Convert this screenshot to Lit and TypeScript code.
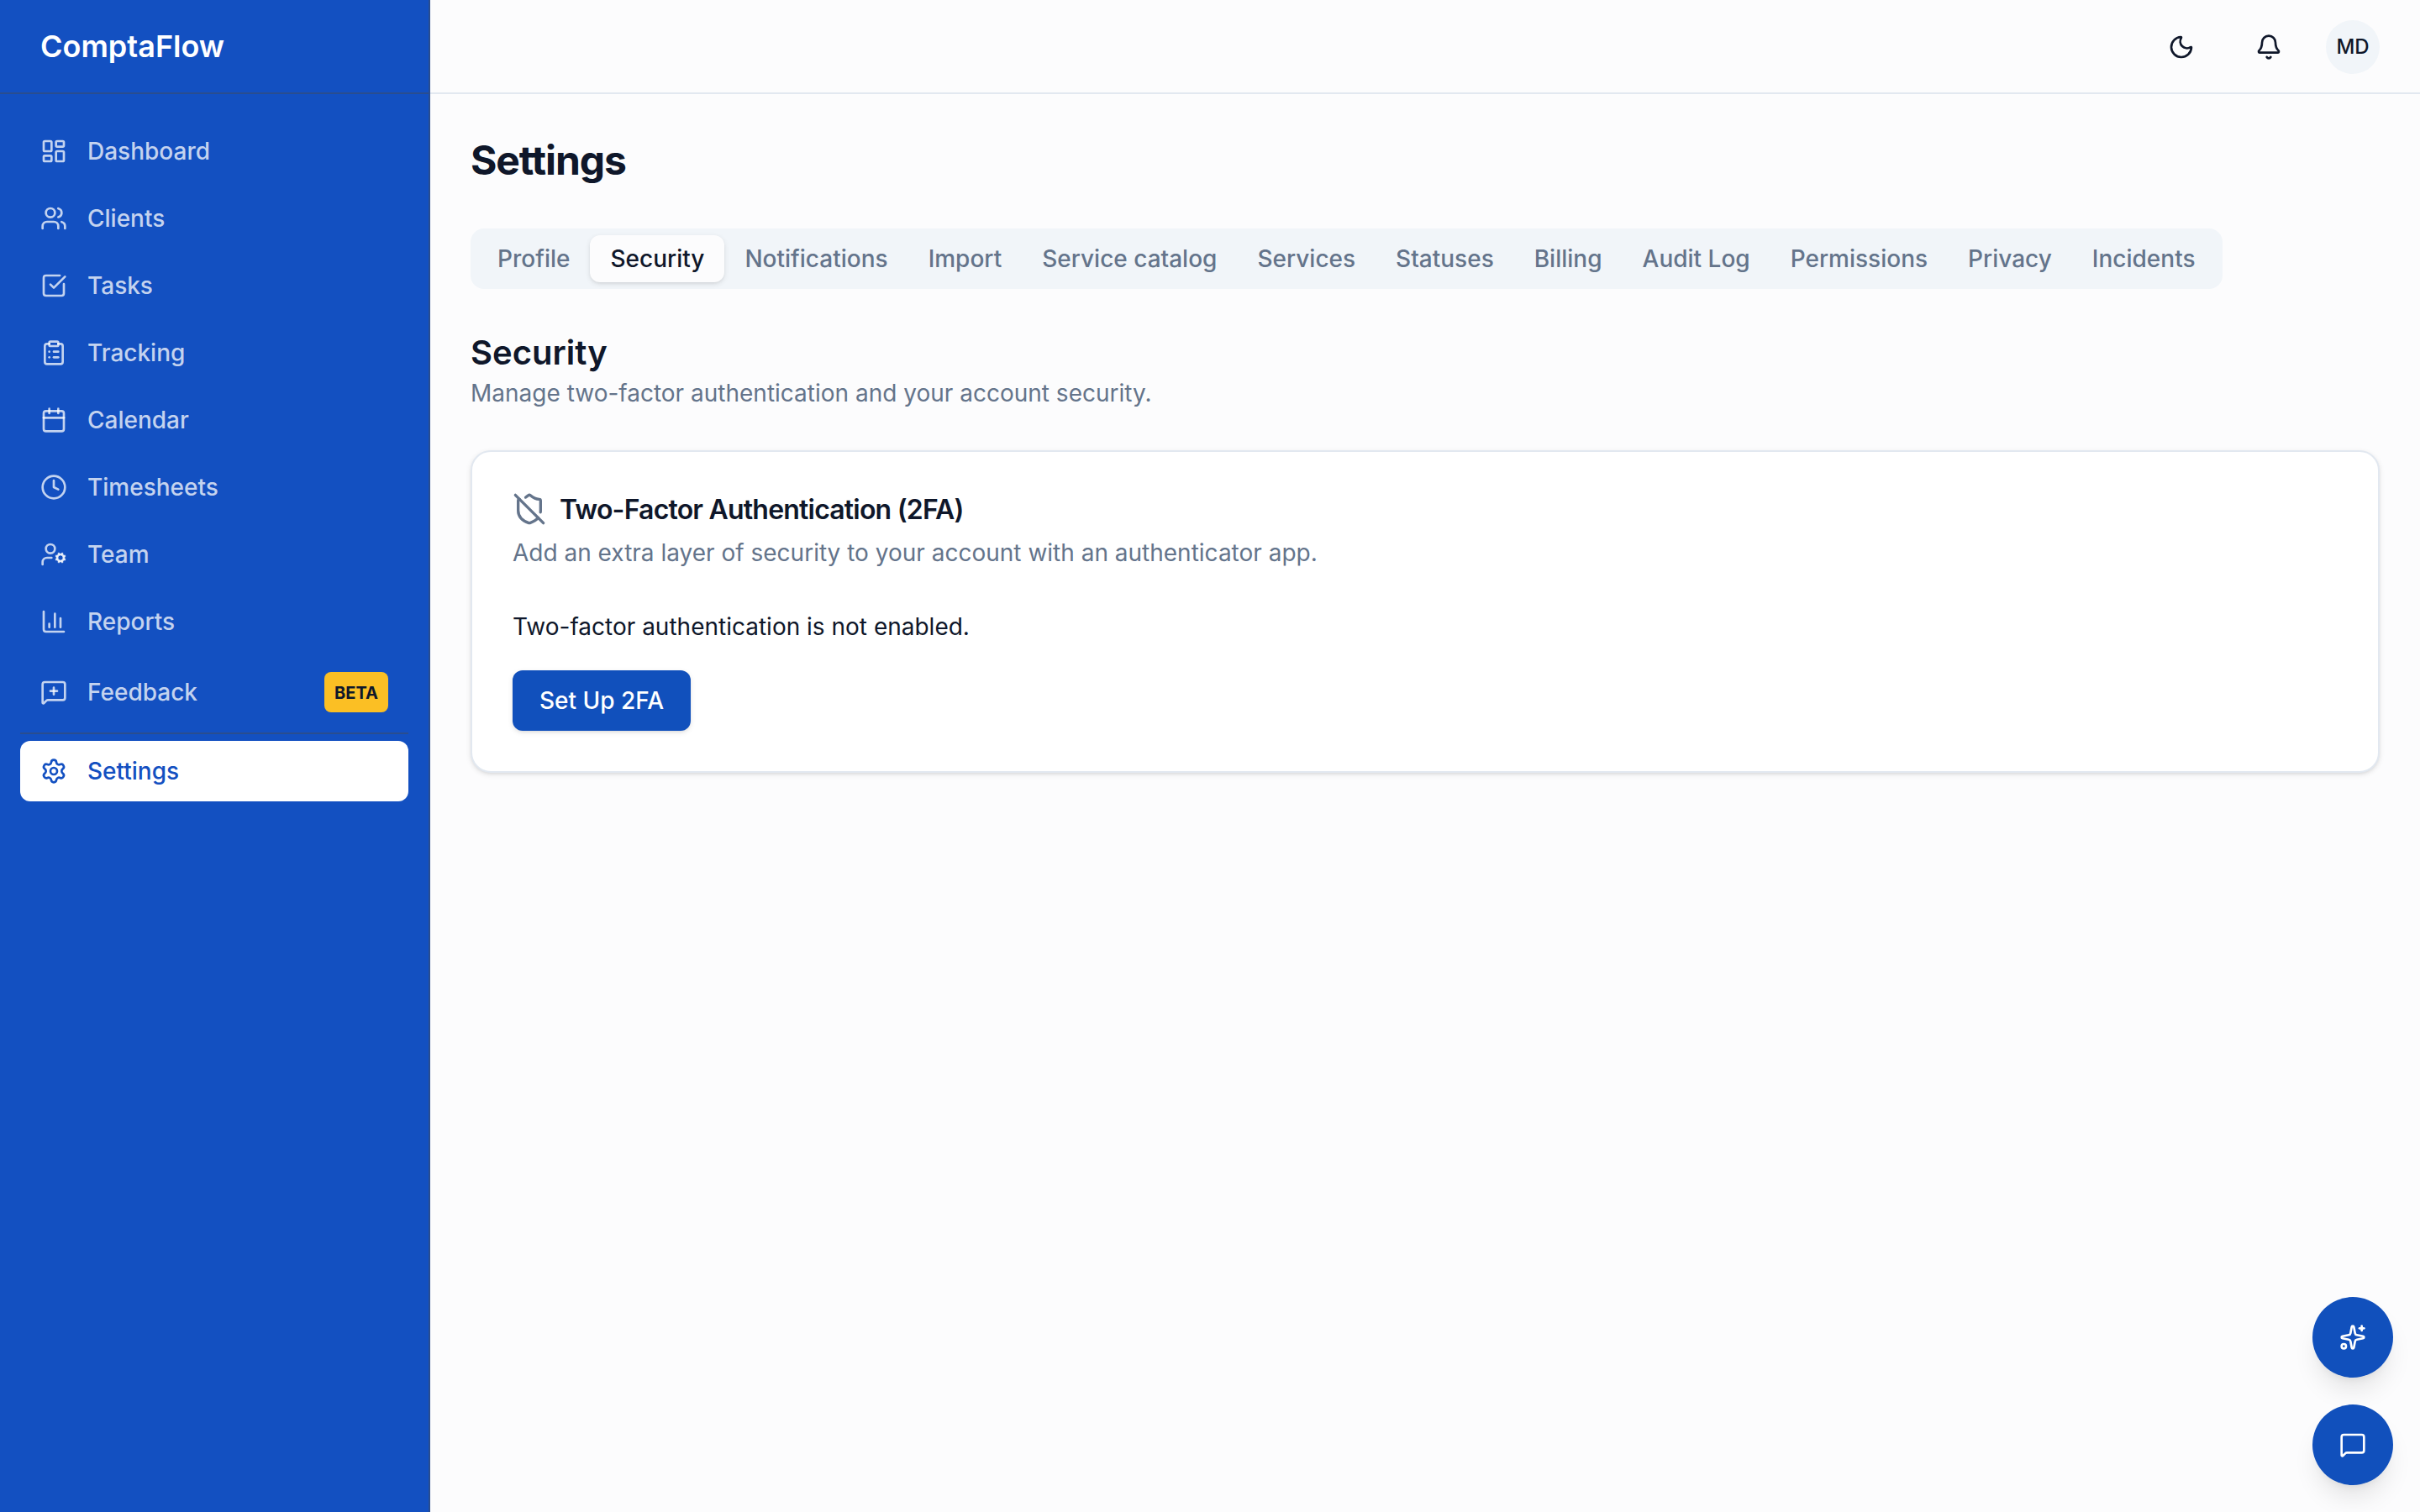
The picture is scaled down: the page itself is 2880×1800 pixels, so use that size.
import { LitElement, html, svg, css } from "lit";
import { customElement, property } from "lit/decorators.js";
import { classMap } from "lit/directives/class-map.js";

const ICONS: Record<string, unknown> = {
  dashboard: svg`<rect width="7" height="9" x="3" y="3" rx="1"/><rect width="7" height="5" x="14" y="3" rx="1"/><rect width="7" height="9" x="14" y="12" rx="1"/><rect width="7" height="5" x="3" y="16" rx="1"/>`,
  users: svg`<path d="M16 21v-2a4 4 0 0 0-4-4H6a4 4 0 0 0-4 4v2"/><path d="M16 3.128a4 4 0 0 1 0 7.744"/><path d="M22 21v-2a4 4 0 0 0-3-3.87"/><circle cx="9" cy="7" r="4"/>`,
  check: svg`<path d="M21 10.656V19a2 2 0 0 1-2 2H5a2 2 0 0 1-2-2V5a2 2 0 0 1 2-2h12.344"/><path d="m9 11 3 3L22 4"/>`,
  clipboard: svg`<rect width="8" height="4" x="8" y="2" rx="1" ry="1"/><path d="M16 4h2a2 2 0 0 1 2 2v14a2 2 0 0 1-2 2H6a2 2 0 0 1-2-2V6a2 2 0 0 1 2-2h2"/><path d="M12 11h4"/><path d="M12 16h4"/><path d="M8 11h.01"/><path d="M8 16h.01"/>`,
  calendar: svg`<path d="M8 2v4"/><path d="M16 2v4"/><rect width="18" height="18" x="3" y="4" rx="2"/><path d="M3 10h18"/>`,
  clock: svg`<path d="M12 6v6l4 2"/><circle cx="12" cy="12" r="10"/>`,
  userCog: svg`<path d="M10 15H6a4 4 0 0 0-4 4v2"/><path d="m14.305 16.53.923-.382"/><path d="m15.228 13.852-.923-.383"/><path d="m16.852 12.228-.383-.923"/><path d="m16.852 17.772-.383.924"/><path d="m19.148 12.228.383-.923"/><path d="m19.53 18.696-.382-.924"/><path d="m20.772 13.852.924-.383"/><path d="m20.772 16.148.924.383"/><circle cx="18" cy="15" r="3"/><circle cx="9" cy="7" r="4"/>`,
  chart: svg`<path d="M3 3v16a2 2 0 0 0 2 2h16"/><path d="M18 17V9"/><path d="M13 17V5"/><path d="M8 17v-3"/>`,
  messagePlus: svg`<path d="M22 17a2 2 0 0 1-2 2H6.828a2 2 0 0 0-1.414.586l-2.202 2.202A.71.71 0 0 1 2 21.286V5a2 2 0 0 1 2-2h16a2 2 0 0 1 2 2z"/><path d="M12 8v6"/><path d="M9 11h6"/>`,
  message: svg`<path d="M22 17a2 2 0 0 1-2 2H6.828a2 2 0 0 0-1.414.586l-2.202 2.202A.71.71 0 0 1 2 21.286V5a2 2 0 0 1 2-2h16a2 2 0 0 1 2 2z"/>`,
  settings: svg`<path d="M9.671 4.136a2.34 2.34 0 0 1 4.659 0 2.34 2.34 0 0 0 3.319 1.915 2.34 2.34 0 0 1 2.33 4.033 2.34 2.34 0 0 0 0 3.831 2.34 2.34 0 0 1-2.33 4.033 2.34 2.34 0 0 0-3.319 1.915 2.34 2.34 0 0 1-4.659 0 2.34 2.34 0 0 0-3.32-1.915 2.34 2.34 0 0 1-2.33-4.033 2.34 2.34 0 0 0 0-3.831A2.34 2.34 0 0 1 6.35 6.051a2.34 2.34 0 0 0 3.319-1.915"/><circle cx="12" cy="12" r="3"/>`,
  moon: svg`<path d="M20.985 12.486a9 9 0 1 1-9.473-9.472c.405-.022.617.46.402.803a6 6 0 0 0 8.268 8.268c.344-.215.825-.004.803.401"/>`,
  bell: svg`<path d="M10.268 21a2 2 0 0 0 3.464 0"/><path d="M3.262 15.326A1 1 0 0 0 4 17h16a1 1 0 0 0 .74-1.673C19.41 13.956 18 12.499 18 8A6 6 0 0 0 6 8c0 4.499-1.411 5.956-2.738 7.326"/>`,
  shieldOff: svg`<path d="m2 2 20 20"/><path d="M5 5a1 1 0 0 0-1 1v7c0 5 3.5 7.5 7.67 8.94a1 1 0 0 0 .67.01c2.35-.82 4.48-1.97 5.9-3.71"/><path d="M9.309 3.652A12.252 12.252 0 0 0 11.24 2.28a1.17 1.17 0 0 1 1.52 0C14.51 3.81 17 5 19 5a1 1 0 0 1 1 1v7a9.784 9.784 0 0 1-.08 1.264"/>`,
  sparkles: svg`<path d="M11.017 2.814a1 1 0 0 1 1.966 0l1.051 5.558a2 2 0 0 0 1.594 1.594l5.558 1.051a1 1 0 0 1 0 1.966l-5.558 1.051a2 2 0 0 0-1.594 1.594l-1.051 5.558a1 1 0 0 1-1.966 0l-1.051-5.558a2 2 0 0 0-1.594-1.594l-5.558-1.051a1 1 0 0 1 0-1.966l5.558-1.051a2 2 0 0 0 1.594-1.594z"/><path d="M20 2v4"/><path d="M22 4h-4"/><circle cx="4" cy="20" r="2"/>`,
};

@customElement("line-icon")
class LineIcon extends LitElement {
  @property() name = "";

  static styles = css`
    :host { display: block; flex: none; width: 32px; height: 32px; }
    .glyph {
      display: block; width: 100%; height: 100%;
      fill: none; stroke: currentColor; stroke-width: 2;
      stroke-linecap: round; stroke-linejoin: round;
    }
  `;

  render() {
    return html`<svg class="glyph" viewBox="0 0 24 24" aria-hidden="true">${ICONS[this.name]}</svg>`;
  }
}

interface NavEntry { icon: string; label: string; badge?: string }

const NAV: NavEntry[] = [
  { icon: "dashboard", label: "Dashboard" },
  { icon: "users", label: "Clients" },
  { icon: "check", label: "Tasks" },
  { icon: "clipboard", label: "Tracking" },
  { icon: "calendar", label: "Calendar" },
  { icon: "clock", label: "Timesheets" },
  { icon: "userCog", label: "Team" },
  { icon: "chart", label: "Reports" },
  { icon: "messagePlus", label: "Feedback", badge: "BETA" },
];

const TABS = [
  "Profile", "Security", "Notifications", "Import", "Service catalog", "Services",
  "Statuses", "Billing", "Audit Log", "Permissions", "Privacy", "Incidents",
];

@customElement("app-sidebar")
class AppSidebar extends LitElement {
  static styles = css`
    :host {
      display: flex; flex-direction: column; box-sizing: border-box;
      width: 512px; flex: none;
      background: #1350c1; border-right: 2px solid #294d8f;
    }
    .brand {
      box-sizing: border-box; height: 112px; padding: 0 48px;
      display: flex; align-items: center;
      border-bottom: 2px solid #294d8f;
      color: #fff; font-size: 36px; line-height: 56px; font-weight: 600;
    }
    .nav { display: flex; flex-direction: column; gap: 8px; padding: 32px 24px; }
    .item {
      display: flex; align-items: center; gap: 24px;
      padding: 16px 24px; border-radius: 12px;
      font-size: 28px; line-height: 40px; font-weight: 500;
      color: rgba(255, 255, 255, 0.75); text-decoration: none;
    }
    .item.active { background: #fff; color: #1350c1; }
    .badge {
      margin-left: auto; padding: 10px 12px 8px; border-radius: 8px;
      background: #fbbf24; color: #0f172a;
      font-size: 20px; line-height: 30px; font-weight: 700;
    }
    .rule { height: 2px; background: #294d8f; }
  `;

  render() {
    return html`
      <div class="brand">ComptaFlow</div>
      <nav class="nav">
        ${NAV.map((n) => html`
          <a class="item">
            <line-icon name=${n.icon}></line-icon>
            <span>${n.label}</span>
            ${n.badge ? html`<span class="badge">${n.badge}</span>` : null}
          </a>`)}
        <div class="rule"></div>
        <a class="item active"><line-icon name="settings"></line-icon><span>Settings</span></a>
      </nav>
    `;
  }
}

@customElement("app-root")
class AppRoot extends LitElement {
  @property() tab = "Security";

  static styles = css`
    :host {
      display: flex; width: 100%; height: 100vh; overflow: hidden;
      background: #fcfcfd; color: #0f172a;
      font-family: Inter, "Liberation Sans", sans-serif;
      font-size: 28px; line-height: 40px;
    }
    .page { flex: 1; min-width: 0; display: flex; flex-direction: column; }
    .topbar {
      box-sizing: border-box; height: 112px; padding: 2px 48px 0;
      display: flex; align-items: center; justify-content: flex-end; gap: 32px;
      border-bottom: 2px solid #e2e8f0;
    }
    .icon-btn { width: 72px; height: 72px; display: grid; place-items: center; }
    .avatar {
      width: 64px; height: 64px; border-radius: 50%;
      display: grid; place-items: center;
      background: #f1f5f9; font-size: 24px; line-height: 32px; font-weight: 500;
    }
    .main { display: flex; flex-direction: column; align-items: stretch; gap: 48px; padding: 48px; }
    .title {
      margin: 0; padding-bottom: 2px;
      font-size: 48px; line-height: 62px; font-weight: 700; letter-spacing: -0.023em;
    }
    .tabs {
      align-self: flex-start; display: flex; box-sizing: border-box; height: 72px; padding: 8px;
      border-radius: 16px; background: #f1f5f9;
    }
    .tab {
      padding: 8px 24px; border-radius: 12px; white-space: nowrap;
      font-weight: 500; color: #64748b;
    }
    .tab.active {
      background: #fcfcfd; color: #0f172a;
      box-shadow: 0 2px 6px rgba(0, 0, 0, 0.1), 0 2px 4px -2px rgba(0, 0, 0, 0.1);
    }
    .heading { margin: 0; font-size: 40px; line-height: 56px; font-weight: 600; }
    .muted { margin: 0; color: #64748b; }
    .card {
      display: flex; flex-direction: column; align-items: flex-start;
      padding: 48px; border: 2px solid #e2e8f0; border-radius: 24px; background: #fff;
      box-shadow: 0 2px 6px rgba(0, 0, 0, 0.1), 0 2px 4px -2px rgba(0, 0, 0, 0.1);
    }
    .card-title {
      margin: 0 0 12px; display: flex; align-items: center; gap: 16px;
      font-size: 32px; line-height: 32px; font-weight: 600; letter-spacing: -0.025em;
    }
    .card-title line-icon { width: 40px; height: 40px; color: #64748b; }
    .card-label { padding-top: 2px; }
    .status { margin: 48px 0 32px; }
    .primary {
      padding: 16px 32px; border: 0; border-radius: 12px;
      background: #1150bc; color: #fff; font: inherit; font-weight: 500;
      box-shadow: 0 2px 6px rgba(0, 0, 0, 0.1), 0 2px 4px -2px rgba(0, 0, 0, 0.1);
    }
    .floating {
      position: absolute; right: 32px; bottom: 32px;
      display: flex; flex-direction: column; gap: 32px;
    }
    .fab {
      width: 96px; height: 96px; border-radius: 50%;
      display: grid; place-items: center;
      background: #1150bc; color: #fff;
      box-shadow: 0 20px 30px -6px rgba(0, 0, 0, 0.1), 0 8px 12px -8px rgba(0, 0, 0, 0.1);
    }
  `;

  render() {
    return html`
      <app-sidebar></app-sidebar>
      <div class="page">
        <header class="topbar">
          <div class="icon-btn"><line-icon name="moon"></line-icon></div>
          <div class="icon-btn"><line-icon name="bell"></line-icon></div>
          <div class="avatar">MD</div>
        </header>
        <main class="main">
          <h1 class="title">Settings</h1>
          <div class="tabs">
            ${TABS.map((t) => html`<div class=${classMap({ tab: true, active: t === this.tab })}>${t}</div>`)}
          </div>
          <section>
            <h2 class="heading">Security</h2>
            <p class="muted">Manage two-factor authentication and your account security.</p>
          </section>
          <section class="card">
            <h3 class="card-title">
              <line-icon name="shieldOff"></line-icon>
              <span class="card-label">Two-Factor Authentication (2FA)</span>
            </h3>
            <p class="muted">Add an extra layer of security to your account with an authenticator app.</p>
            <p class="status">Two-factor authentication is not enabled.</p>
            <button class="primary">Set Up 2FA</button>
          </section>
        </main>
      </div>
      <div class="floating">
        <div class="fab"><line-icon name="sparkles"></line-icon></div>
        <div class="fab"><line-icon name="message"></line-icon></div>
      </div>
    `;
  }
}
